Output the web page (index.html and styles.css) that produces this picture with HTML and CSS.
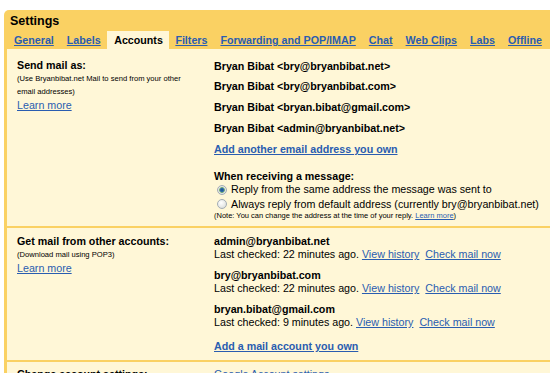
FILE: index.html
```html
<!DOCTYPE html>
<html lang="en">
<head>
    <meta charset="UTF-8">
    <title>Settings - Accounts</title>
    <link rel="stylesheet" href="styles.css">
</head>
<body>

    <div class="settings">
        <!-- Header with title and tabs -->
        <div class="settings-head">
            <h1>Settings</h1>
            <ul class="tabs">
                <li><a href="#">General</a></li>
                <li><a href="#">Labels</a></li>
                <li class="active">Accounts</li>
                <li><a href="#">Filters</a></li>
                <li><a href="#">Forwarding and POP/IMAP</a></li>
                <li><a href="#">Chat</a></li>
                <li><a href="#">Web Clips</a></li>
                <li><a href="#">Labs</a></li>
                <li><a href="#">Offline</a></li>
            </ul>
        </div>

        <div class="settings-body">
            <!-- Send mail as -->
            <div class="section send-as">
                <div class="section-label">
                    <div class="label-title">Send mail as:</div>
                    <div class="label-note">(Use Bryanbibat.net Mail to send from your other email addresses)</div>
                    <a class="learn" href="#">Learn more</a>
                </div>
                <div class="section-value">
                    <div class="address">Bryan Bibat &lt;bry@bryanbibat.net&gt;</div>
                    <div class="address">Bryan Bibat &lt;bry@bryanbibat.com&gt;</div>
                    <div class="address">Bryan Bibat &lt;bryan.bibat@gmail.com&gt;</div>
                    <div class="address">Bryan Bibat &lt;admin@bryanbibat.net&gt;</div>
                    <div class="address"><a class="strong-link" href="#">Add another email address you own</a></div>

                    <div class="reply-title">When receiving a message:</div>
                    <label class="radio-row"><input type="radio" name="reply" checked> Reply from the same address the message was sent to</label>
                    <label class="radio-row"><input type="radio" name="reply"> Always reply from default address (currently bry@bryanbibat.net)</label>
                    <div class="reply-note">(Note: You can change the address at the time of your reply. <a href="#">Learn more</a>)</div>
                </div>
            </div>

            <!-- Get mail from other accounts -->
            <div class="section get-mail">
                <div class="section-label">
                    <div class="label-title">Get mail from other accounts:</div>
                    <div class="label-note">(Download mail using POP3)</div>
                    <a class="learn" href="#">Learn more</a>
                </div>
                <div class="section-value">
                    <div class="account">
                        <div class="account-name">admin@bryanbibat.net</div>
                        <div>Last checked: 22 minutes ago. <a href="#">View history</a> <a class="check" href="#">Check mail now</a></div>
                    </div>
                    <div class="account">
                        <div class="account-name">bry@bryanbibat.com</div>
                        <div>Last checked: 22 minutes ago. <a href="#">View history</a> <a class="check" href="#">Check mail now</a></div>
                    </div>
                    <div class="account">
                        <div class="account-name">bryan.bibat@gmail.com</div>
                        <div>Last checked: 9 minutes ago. <a href="#">View history</a> <a class="check" href="#">Check mail now</a></div>
                    </div>
                    <a class="strong-link add-account" href="#">Add a mail account you own</a>
                </div>
            </div>

            <!-- Change account settings -->
            <div class="section change">
                <div class="section-label">
                    <div class="label-title">Change account settings:</div>
                </div>
                <div class="section-value">
                    <a href="#">Google Account settings</a>
                </div>
            </div>
        </div>
    </div>

</body>
</html>
```

FILE: styles.css
```css
body {
    margin: 0;
    background-color: #fff;
    font-family: "Liberation Sans", Arial, sans-serif;
    font-size: 10.7px;
    color: #000;
    overflow: hidden;
}
a {
    color: #2a5db0;
}
.settings {
    margin: 10px 0 0 4px;
    width: 580px;
    background-color: #fad163;
    border-radius: 5px 0 0 0;
    padding-left: 3px;
}
.settings-head h1 {
    margin: 0;
    padding: 4px 0 0 3px;
    font-size: 12.5px;
    line-height: 15px;
}
.tabs {
    list-style: none;
    display: flex;
    margin: 2px 0 0 0;
    padding: 0 0 0 0.5px;
}
.tabs li {
    padding: 1px 6.5px 0;
    line-height: 17px;
    font-weight: bold;
    white-space: nowrap;
}
.tabs li a {
    color: #2a5db0;
}
.tabs li.active {
    background-color: #fff7d7;
    padding: 1px 6px 0 7px;
}
.settings-body {
    background-color: #fff7d7;
}
.section {
    display: flex;
    padding-left: 10px;
    border-bottom: 2px solid #fad163;
}
.section-label {
    width: 180px;
    margin-right: 17px;
    flex-shrink: 0;
}
.label-title {
    font-weight: bold;
    line-height: 14px;
}
.label-note {
    font-size: 7.6px;
    line-height: 13px;
}
.learn {
    display: block;
    line-height: 14px;
}
.section-value {
    flex-grow: 1;
}

/* Send mail as */
.send-as {
    padding: 6.5px 0 5.5px 10px;
}
.send-as .section-label {
    padding-top: 2.7px;
}
.address {
    font-weight: bold;
    line-height: 20.8px;
}
.strong-link {
    font-weight: bold;
}
.reply-title {
    font-weight: bold;
    line-height: 12px;
    margin-top: 11px;
}
.radio-row {
    display: flex;
    align-items: center;
    line-height: 14.3px;
}
.radio-row input {
    appearance: none;
    width: 10px;
    height: 10px;
    margin: 0 4px 0 3px;
    border: 1px solid #a3acb5;
    border-radius: 50%;
    background: radial-gradient(circle at 40% 35%, #fff 0%, #e6e8e6 60%, #cfd3cf 100%);
    box-sizing: border-box;
}
.radio-row input:checked {
    background: radial-gradient(circle, #1e4f8c 0, #2d6aa8 1.6px, #7fb07a 2.6px, #e8ebe8 3.2px, #cfd3cf 100%);
}
.reply-note {
    font-size: 7.5px;
    line-height: 9px;
}

/* Get mail from other accounts */
.get-mail {
    padding: 7.2px 0 6px 10px;
}
.get-mail .label-title {
    line-height: 13.3px;
}
.account {
    line-height: 13.3px;
    margin-bottom: 7.4px;
}
.account .check {
    margin-left: 3px;
}
.account-name {
    font-weight: bold;
}
.add-account {
    display: block;
    margin-top: 11px;
    line-height: 13.3px;
}

/* Change account settings */
.change {
    padding: 5px 0 10px 10px;
    line-height: 14px;
}
```
